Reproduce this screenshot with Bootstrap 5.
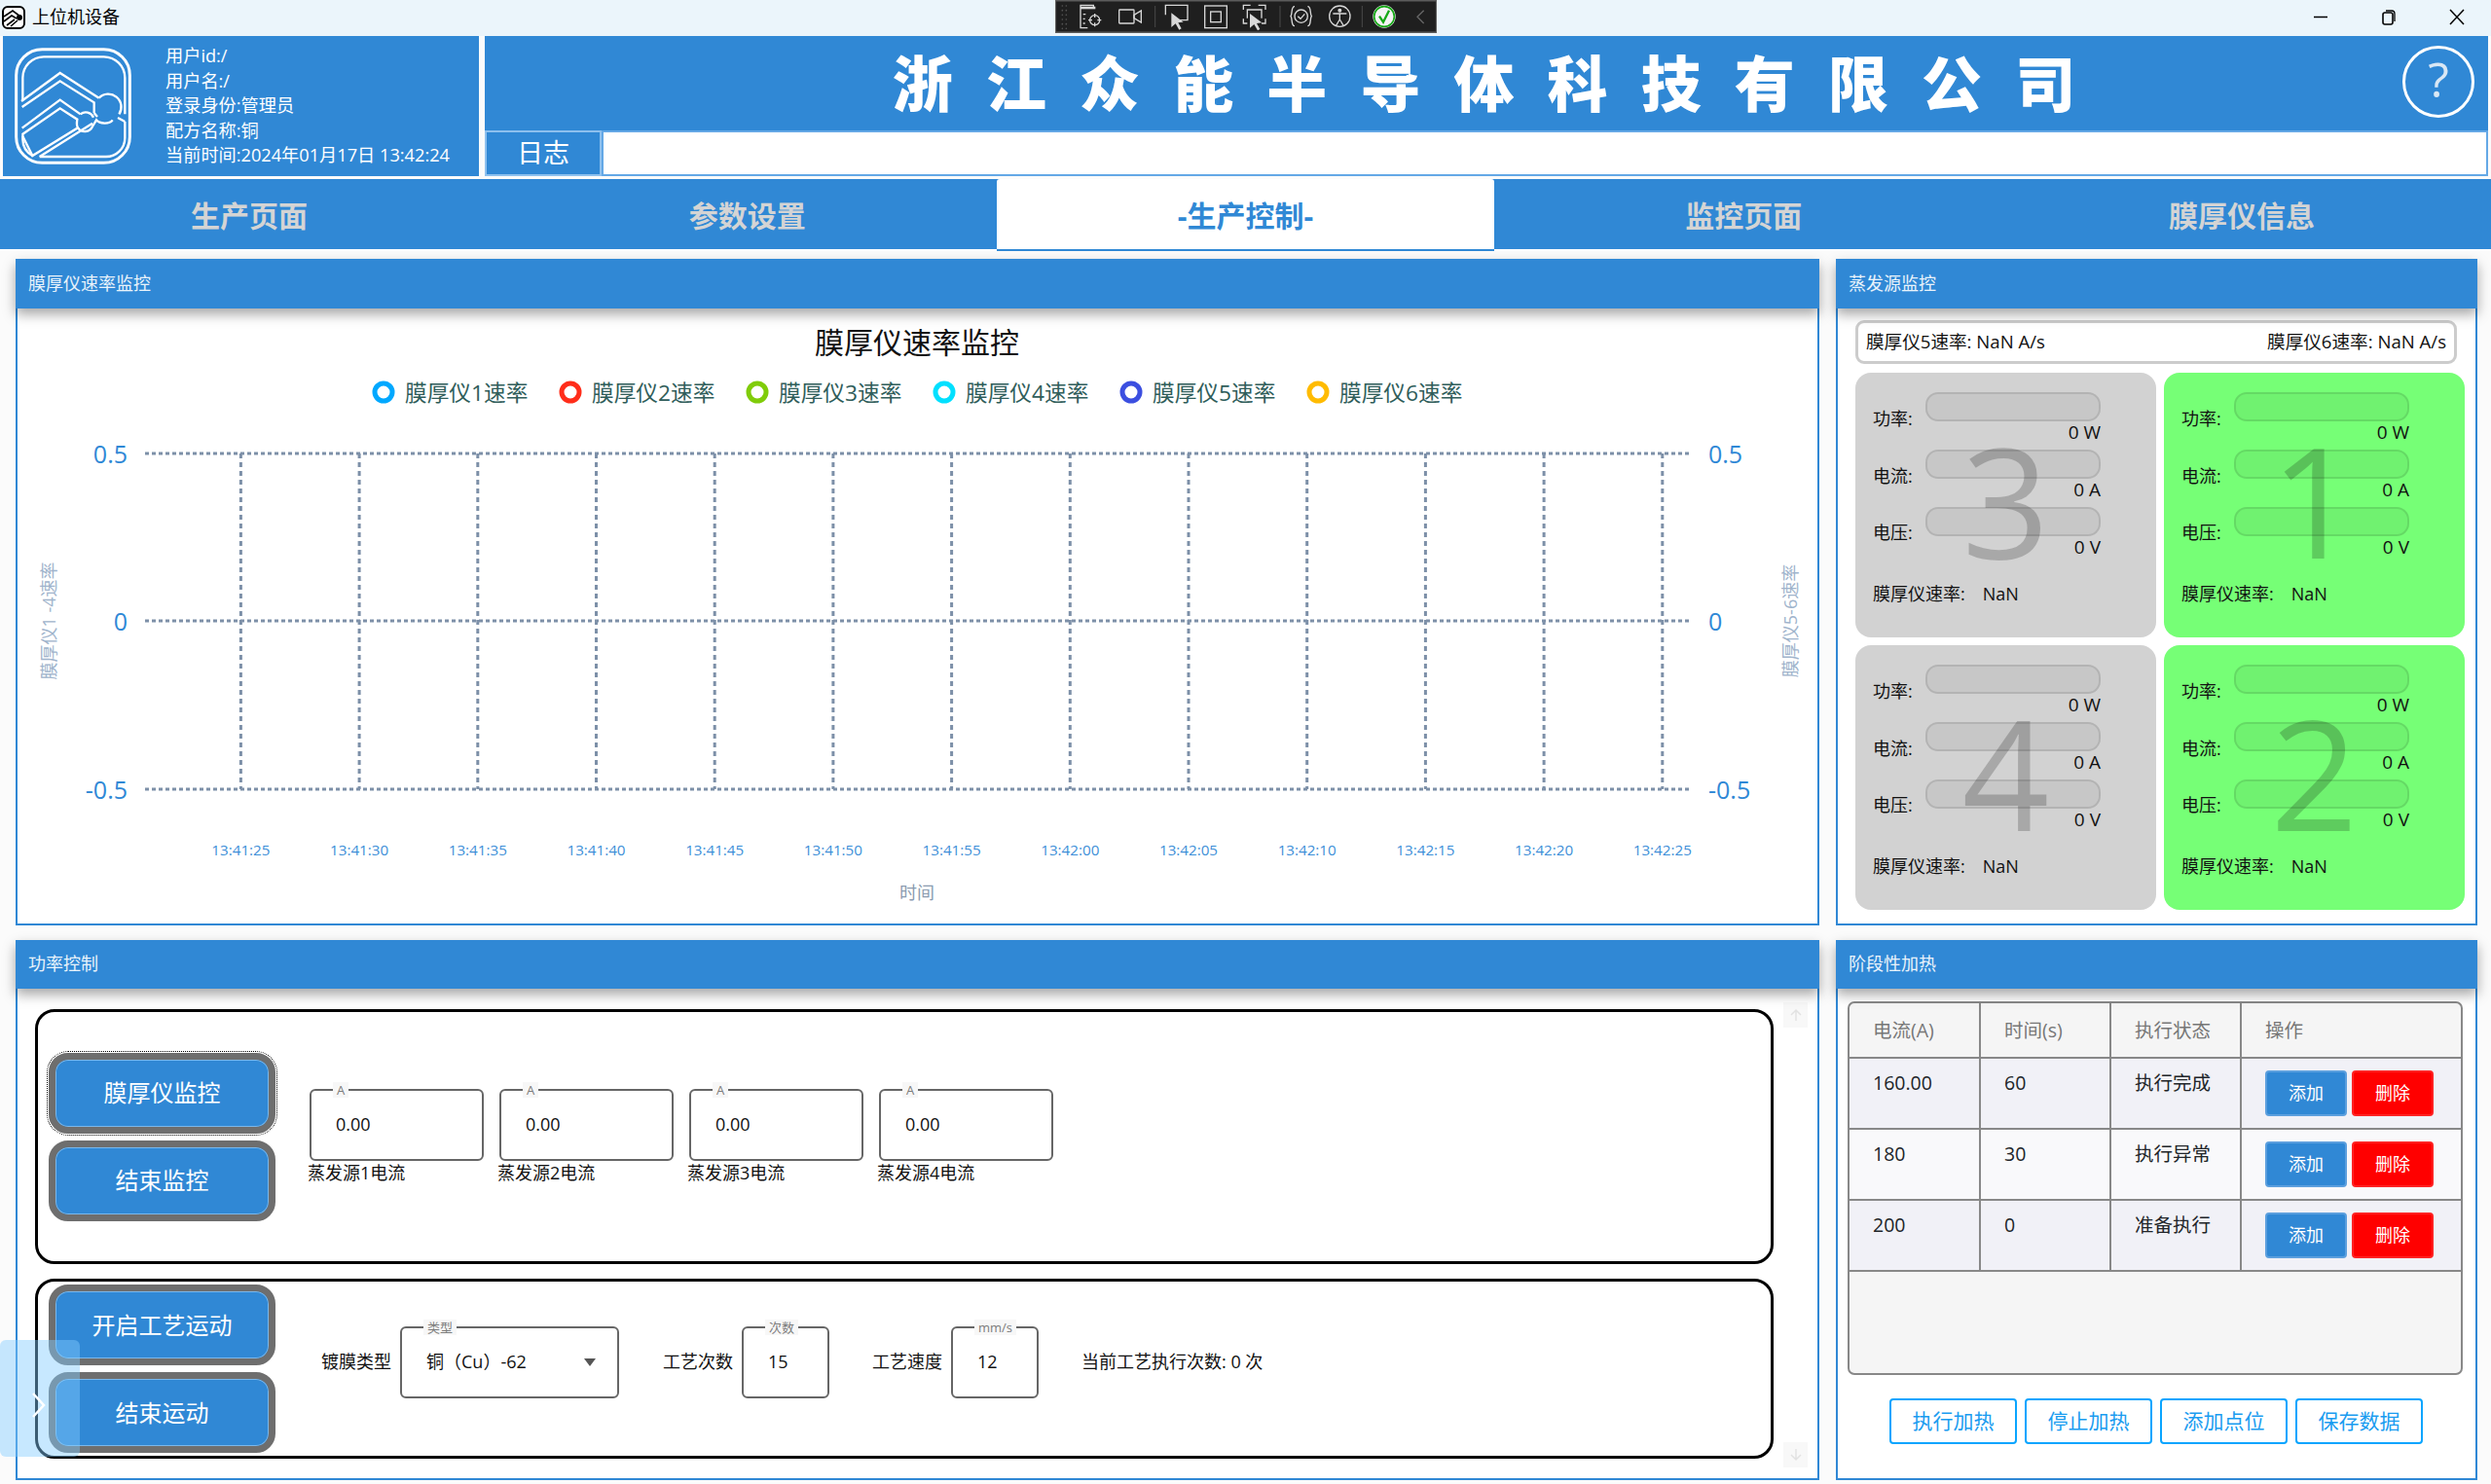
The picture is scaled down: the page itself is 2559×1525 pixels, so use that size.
<!DOCTYPE html>
<html lang="zh-CN">
<head>
<meta charset="utf-8">
<title>上位机设备</title>
<link href="https://cdn.jsdelivr.net/npm/bootstrap@5.3.0/dist/css/bootstrap.min.css" rel="stylesheet">
<style>
:root{--bl:#3088d5;}
html,body{height:100%;}
body{width:2559px;height:1525px;overflow:hidden;background:#fbfbfb;font-family:"Open Sans","Noto Sans CJK SC",sans-serif;font-size:18px;color:#111;position:relative;line-height:1.2;}
.win-bar{height:37px;background:#ebf5fb;padding:0 0 2px 2px;gap:7px;}
.win-name{font-size:18px;color:#000;}
.debug-bar{position:absolute;left:1084px;top:0;width:392px;height:34px;}
.win-btns{margin-left:auto;width:210px;}
.win-btns svg{width:70px;height:34px;}
.top-head{height:144px;padding:0 3px;gap:6px;}
.org-box{width:489px;background:var(--bl);color:#fff;padding-left:12px;gap:35px;}
.org-info{line-height:25.6px;font-size:18.2px;white-space:nowrap;}
.title-box{flex:1;min-width:0;}
.title-band{height:97px;background:var(--bl);position:relative;}
.title-text{font-size:62px;font-weight:900;color:#fff;word-spacing:8px;letter-spacing:5px;margin-top:1px;}
.help-circle{position:absolute;right:14px;top:10px;width:74px;height:74px;border:3px solid #fff;border-radius:50%;color:#d9e7f4;font-size:50px;line-height:62px;text-align:center;}
.log-row{height:47px;}
.log-tag{width:120px;background:var(--bl);border:2px solid #8dc0ee;color:#fff;font-size:27px;}
.log-input{flex:1;background:#fff;border:2px solid #64a8e6;}
.tab-bar{height:74px;background:var(--bl);margin-top:3px;border-bottom:2px solid #fff;}
.tab-item{width:20%;font-size:30px;font-weight:700;color:#d4d4d4;padding-top:4px;}
.tab-on{background:#fff;color:var(--bl);border-radius:3px 3px 0 0;border-bottom:2px solid var(--bl);margin-bottom:-2px;}
.board{padding:8px 14px 0 16px;}
.board-row{gap:17px;margin-bottom:15px;}
.pane{background:#fff;border:2px solid var(--bl);border-radius:0;}
.pane-main{width:1853px;}
.pane-side{width:659px;}
.pane-upper{height:685px;}
.pane-lower{height:555px;}
.pane .card-header{background:var(--bl);color:#e9f3fb;border:0;border-radius:0;font-size:18px;padding:0 13px;display:flex;align-items:center;box-shadow:0 6px 12px rgba(0,0,0,.35);margin:-2px -2px 0;position:relative;z-index:1;}
.pane-upper .card-header{height:51px;}
.pane-lower .card-header{height:50px;}
.chart-svg{display:block;width:1849px;height:632px;}
.chart-svg text{font-family:"Open Sans","Noto Sans CJK SC",sans-serif;}
.rate-box{margin:12px 19px 0 18px;height:45px;border:3px solid #ccc;border-radius:9px;padding:0 8px;font-size:18.6px;white-space:nowrap;}
.gauge-grid{display:grid;grid-template-columns:309px 309px;grid-auto-rows:272px;gap:8px;margin:9px 0 0 18px;}
.gauge-cell{border-radius:16px;padding:20px 0 0 18px;position:relative;overflow:hidden;}
.gauge-off{background:#d2d2d2;}
.gauge-on{background:#76ff76;}
.gauge-num{position:absolute;left:0;right:0;top:33px;text-align:center;font-size:157px;line-height:195px;color:rgba(0,0,0,.2);}
.gauge-line{height:52px;margin-bottom:6.8px;}
.gauge-lab{width:54px;padding-top:3px;}
.gauge-col{width:180px;}
.gauge-track{height:30px;border-radius:13px;background:rgba(0,0,0,.05);border:2px solid rgba(0,0,0,.1);}
.gauge-val{text-align:right;font-size:19px;line-height:22px;}
.gauge-rate{margin-top:27px;gap:18px;}
.frame-box{border:3px solid #000;border-radius:20px;position:relative;}
.frame-one{height:262px;margin:21px 45px 0 18px;padding-left:11px;}
.frame-two{height:185px;margin:15px 45px 0 18px;padding-left:11px;}
.btn-stack{width:233px;gap:7px;}
.big-btn{height:83px;background:var(--bl);color:#fff;border:7px solid #6e6e6e;border-radius:20px;font-size:24px;box-shadow:inset 0 0 0 1px #7ab8ec;padding:0;}
.big-btn:hover{background:var(--bl);color:#fff;border-color:#6e6e6e;}
.big-focus{outline:1px dotted #000;outline-offset:1px;}
.num-group{margin-left:35px;gap:16px;}
.num-field{width:179px;}
.note-box{height:74px;border:2px solid #666;border-radius:6px;position:relative;display:flex;align-items:center;padding-left:25px;color:#111;}
.note-tag{position:absolute;top:-9px;left:22px;background:#f7f7f7;color:#7c7c7c;font-size:13px;line-height:16px;padding:0 4px;white-space:nowrap;}
.num-cap{margin:2px 0 0 -2px;color:#111;}
.proc-row{margin-left:47px;padding-bottom:13px;}
.proc-sel{width:225px;margin:0 45px 0 9px;padding-right:22px;justify-content:space-between;}
.proc-num{width:90px;margin:0 44px 0 9px;}
.tri{width:0;height:0;border-left:6px solid transparent;border-right:6px solid transparent;border-top:8px solid #555;}
.proc-now{white-space:nowrap;}
.side-pull{position:absolute;left:0;top:1377px;width:82px;height:120px;background:rgba(130,205,255,.45);border-radius:6px;}
.side-pull svg{position:absolute;left:32px;top:53px;}
.scroll-arrow{position:absolute;left:1814px;width:25px;height:26px;background:#f8f8f8;}
.scroll-up{top:62px;}
.scroll-down{top:514px;}
.table-box{margin:13px 13px 0 10px;height:384px;background:#f5f5f5;border:2px solid #888;border-radius:7px;overflow:hidden;}
.heat-table{margin:0;width:1028px;table-layout:fixed;--bs-table-bg:transparent;border-collapse:collapse;}
.heat-table th,.heat-table td{border:2px solid #888;border-top:0;padding:13px 0 0 24px;font-weight:400;height:73px;font-size:19.5px;}
.heat-table td:first-child,.heat-table th:first-child{border-left:0;}
.heat-table th{height:56px;color:#777;padding:0 0 0 24px;vertical-align:middle;}
.row-a td{background:#f1f1f7;}
.row-b td{background:#f9f9fb;}
.heat-table td.op-cell{padding:12px 0 0 24px;vertical-align:top;}
.mini-btn{width:84px;height:47px;padding:0;font-size:18px;color:#fff;border-radius:4px;}
.mini-add{background:var(--bl);border:2px solid #5b9fde;}
.mini-del{background:#f00;border:2px solid #f22;margin-left:5px;}
.act-row{margin:24px 0 0 53px;gap:8px;}
.act-btn{width:131px;height:47px;padding:0;border:2px solid #0aa5ff;color:#1a9cf0;background:#fff;border-radius:4px;font-size:21px;}
</style>
</head>
<body>
<div class="win-bar d-flex align-items-center">
  <svg width="24" height="24" viewBox="0 0 24 24"><rect x="1" y="1" width="22" height="22" rx="5" fill="#fff" stroke="#000" stroke-width="2"/><path d="M2 11l9-6 8 6M2 16l8-6 5 3M5 20l8-6M9 21l7-6" fill="none" stroke="#000" stroke-width="1.6"/><circle cx="18" cy="12" r="3" fill="#000"/></svg>
  <span class="win-name">上位机设备</span>
  <div class="win-btns d-flex">
    <svg viewBox="0 0 70 34"><path d="M28 16.500h14" stroke="#000" stroke-width="1.500"/></svg>
    <svg viewBox="0 0 70 34"><rect x="29" y="12" width="10" height="12" rx="2" fill="none" stroke="#000" stroke-width="1.600"/><path d="M32 10h6a3 3 0 0 1 3 3v8" fill="none" stroke="#000" stroke-width="1.300"/></svg>
    <svg viewBox="0 0 70 34"><path d="M28 9l14 15M42 9L28 24" stroke="#000" stroke-width="1.500" fill="none"/></svg>
  </div>
</div>
<svg class="debug-bar" viewBox="12 0 1176 102" aria-hidden="true">
  <rect x="13" y="2" width="1174" height="98" fill="#1f1f1f" stroke="#5c5c5c" stroke-width="5"/>
  <g fill="#555"><circle cx="34" cy="18" r="2.500"/><circle cx="46" cy="18" r="2.500"/><circle cx="34" cy="32" r="2.500"/><circle cx="46" cy="32" r="2.500"/><circle cx="34" cy="46" r="2.500"/><circle cx="46" cy="46" r="2.500"/><circle cx="34" cy="60" r="2.500"/><circle cx="46" cy="60" r="2.500"/><circle cx="34" cy="74" r="2.500"/><circle cx="46" cy="74" r="2.500"/><circle cx="34" cy="88" r="2.500"/><circle cx="46" cy="88" r="2.500"/></g>
  <g fill="none" stroke="#d8d8d8" stroke-width="4">
    <path d="M112 86H90V16h40v10" /><path d="M90 24h46" stroke-width="8"/><path d="M98 44h8M98 58h6M98 72h6"/><circle cx="134" cy="62" r="15"/><path d="M134 42v12M134 70v12M114 62h12M142 62h12"/>
    <rect x="209" y="30" width="46" height="42" rx="2"/><path d="M255 46l22-13v36l-22-13z"/>
    <path d="M352 46V16h68v46h-28"/><path d="M370 40v44l13-11 11 19 7-4-10-18 16-2z" fill="#d8d8d8" stroke="none"/>
    <rect x="473" y="18" width="68" height="68"/><rect x="491" y="36" width="32" height="32"/>
    <path d="M592 30V16h22M638 16h22v14M592 58v14h12M660 58v14h-12"/><path d="M604 56V30h44v26"/><path d="M612 42v44l13-11 11 19 7-4-10-18 16-2z" fill="#d8d8d8" stroke="none"/>
    <path d="M750 20c-12 0-6 20-12 30c6 8 0 30 12 30M790 20c12 0 6 20 12 30c-6 8 0 30-12 30"/><circle cx="770" cy="50" r="20"/><path d="M760 50l8 8 13-15"/>
    <circle cx="889" cy="50" r="32"/><circle cx="889" cy="32" r="4" fill="#d8d8d8"/><path d="M868 42h42M889 42v18M889 60l-12 20M889 60l12 20"/>
    <path d="M1148 32l-20 20 20 20" stroke="#666"/>
  </g>
  <path d="M320 18v66M705 18v66M958 18v66" stroke="#4a4a4a" stroke-width="3"/>
  <circle cx="1026" cy="51" r="35" fill="#f4f4f4"/><circle cx="1026" cy="51" r="31" fill="none" stroke="#16a816" stroke-width="5"/><path d="M1011 50l12 18 18-36" fill="none" stroke="#16a816" stroke-width="7"/>
</svg>

<header class="top-head d-flex">
  <div class="org-box d-flex align-items-center">
    <svg width="120" height="120" viewBox="45 57 360 360" fill="none" stroke="#fff" aria-label="logo">
      <rect x="50" y="62" width="350" height="350" rx="80" stroke-width="9"/>
      <path d="M70 220V150a65 65 0 0 1 65-65h185a65 65 0 0 1 65 65V262M70 325V340a58 58 0 0 0 30 50M385 285V335a58 58 0 0 1-58 58H122" stroke-width="7"/>
      <path d="M66 222L185 135L305 212M68 240L185 160L290 226V258M68 305L185 218L248 262M68 325L185 244L238 278C236 290 236 298 240 304L100 390L70 330" stroke-width="7"/>
      <path d="M305 212a40 40 0 0 1 62 50M290 258l10 12M248 262a26 26 0 0 1 40 10M240 304a26 26 0 0 0 45-4l12-20c10 12 40 14 50 0M385 285l-22-12M285 290L122 393" stroke-width="7"/>
    </svg>
    <div class="org-info">用户id:/<br>用户名:/<br>登录身份:管理员<br>配方名称:铜<br>当前时间:2024年01月17日 13:42:24</div>
  </div>
  <div class="title-box d-flex flex-column">
    <div class="title-band d-flex align-items-center justify-content-center">
      <div class="title-text">浙 江 众 能 半 导 体 科 技 有 限 公 司</div>
      <div class="help-circle">?</div>
    </div>
    <div class="log-row d-flex">
      <div class="log-tag d-flex align-items-center justify-content-center">日志</div>
      <div class="log-input"></div>
    </div>
  </div>
</header>

<nav class="tab-bar d-flex">
  <div class="tab-item d-flex align-items-center justify-content-center">生产页面</div>
  <div class="tab-item d-flex align-items-center justify-content-center">参数设置</div>
  <div class="tab-item tab-on d-flex align-items-center justify-content-center">-生产控制-</div>
  <div class="tab-item d-flex align-items-center justify-content-center">监控页面</div>
  <div class="tab-item d-flex align-items-center justify-content-center">膜厚仪信息</div>
</nav>

<main class="board">
  <div class="board-row d-flex">
    <section class="card pane pane-main pane-upper">
      <div class="card-header">膜厚仪速率监控</div>
      <svg class="chart-svg" viewBox="18 317 1849 632" id="chart"></svg>
    </section>
    <section class="card pane pane-side pane-upper">
      <div class="card-header">蒸发源监控</div>
      <div class="rate-box d-flex align-items-center justify-content-between"><span>膜厚仪5速率: NaN A/s</span><span>膜厚仪6速率: NaN A/s</span></div>
      <div class="gauge-grid" id="gauges"></div>
    </section>
  </div>
  <div class="board-row d-flex">
    <section class="card pane pane-main pane-lower">
      <div class="card-header">功率控制</div>
      <div class="frame-box frame-one d-flex align-items-center">
        <div class="btn-stack d-flex flex-column">
          <button class="btn big-btn big-focus">膜厚仪监控</button>
          <button class="btn big-btn">结束监控</button>
        </div>
        <div class="num-group d-flex">
          <div class="num-field"><div class="note-box"><span class="note-tag">A</span>0.00</div><div class="num-cap">蒸发源1电流</div></div>
          <div class="num-field"><div class="note-box"><span class="note-tag">A</span>0.00</div><div class="num-cap">蒸发源2电流</div></div>
          <div class="num-field"><div class="note-box"><span class="note-tag">A</span>0.00</div><div class="num-cap">蒸发源3电流</div></div>
          <div class="num-field"><div class="note-box"><span class="note-tag">A</span>0.00</div><div class="num-cap">蒸发源4电流</div></div>
        </div>
      </div>
      <div class="frame-box frame-two d-flex align-items-center">
        <div class="btn-stack d-flex flex-column">
          <button class="btn big-btn">开启工艺运动</button>
          <button class="btn big-btn">结束运动</button>
        </div>
        <div class="proc-row d-flex align-items-center">
          <span>镀膜类型</span>
          <div class="note-box proc-sel"><span class="note-tag">类型</span><span>铜（Cu）-62</span><span class="tri"></span></div>
          <span>工艺次数</span>
          <div class="note-box proc-num"><span class="note-tag">次数</span>15</div>
          <span>工艺速度</span>
          <div class="note-box proc-num"><span class="note-tag">mm/s</span>12</div>
          <span class="proc-now">当前工艺执行次数: 0 次</span>
        </div>
      </div>
      <div class="scroll-arrow scroll-up d-flex align-items-center justify-content-center"><svg width="14" height="14" viewBox="0 0 14 14"><path d="M7 13V2M2 7l5-5 5 5" fill="none" stroke="#e2e2e2" stroke-width="1.500"/></svg></div>
      <div class="scroll-arrow scroll-down d-flex align-items-center justify-content-center"><svg width="14" height="14" viewBox="0 0 14 14"><path d="M7 1v11M2 7l5 5 5-5" fill="none" stroke="#e2e2e2" stroke-width="1.500"/></svg></div>
    </section>
    <section class="card pane pane-side pane-lower">
      <div class="card-header">阶段性加热</div>
      <div class="table-box">
        <table class="table heat-table">
          <colgroup><col style="width:134px"><col style="width:134px"><col style="width:134px"><col></colgroup>
          <thead><tr><th>电流(A)</th><th>时间(s)</th><th>执行状态</th><th>操作</th></tr></thead>
          <tbody>
            <tr class="row-a"><td>160.00</td><td>60</td><td>执行完成</td><td class="op-cell"><button class="btn mini-btn mini-add">添加</button><button class="btn mini-btn mini-del">删除</button></td></tr>
            <tr class="row-b"><td>180</td><td>30</td><td>执行异常</td><td class="op-cell"><button class="btn mini-btn mini-add">添加</button><button class="btn mini-btn mini-del">删除</button></td></tr>
            <tr class="row-a"><td>200</td><td>0</td><td>准备执行</td><td class="op-cell"><button class="btn mini-btn mini-add">添加</button><button class="btn mini-btn mini-del">删除</button></td></tr>
          </tbody>
        </table>
      </div>
      <div class="act-row d-flex">
        <button class="btn act-btn">执行加热</button>
        <button class="btn act-btn">停止加热</button>
        <button class="btn act-btn">添加点位</button>
        <button class="btn act-btn">保存数据</button>
      </div>
    </section>
  </div>
</main>
<div class="side-pull"><svg width="16" height="28" viewBox="0 0 16 28"><path d="M2 2l11 12L2 26" fill="none" stroke="#fff" stroke-width="2.500"/></svg></div>

<script>
(function(){
  var g=document.getElementById('gauges');
  [['3','gauge-off'],['1','gauge-on'],['4','gauge-off'],['2','gauge-on']].forEach(function(c){
    var h='<div class="gauge-cell '+c[1]+'"><div class="gauge-num">'+c[0]+'</div>';
    [['功率:','0 W'],['电流:','0 A'],['电压:','0 V']].forEach(function(r){
      h+='<div class="gauge-line d-flex align-items-center"><span class="gauge-lab">'+r[0]+'</span><div class="gauge-col"><div class="gauge-track"></div><div class="gauge-val">'+r[1]+'</div></div></div>';
    });
    h+='<div class="gauge-rate d-flex"><span>膜厚仪速率:</span><span>NaN</span></div></div>';
    g.insertAdjacentHTML('beforeend',h);
  });
  var s='';
  var t=function(x,y,txt,fs,fill,anchor,extra){return '<text x="'+x+'" y="'+y+'" font-size="'+fs+'" fill="'+fill+'" text-anchor="'+(anchor||'middle')+'" dominant-baseline="central" '+(extra||'')+'>'+txt+'</text>';};
  s+=t(942,351,'膜厚仪速率监控',30,'#111');
  var lc=['#00a8ff','#ff2d1a','#80cc0a','#00e0ff','#3c4fe0','#ffbb00'];
  lc.forEach(function(c,i){
    var x=394+i*192;
    s+='<circle cx="'+x+'" cy="403" r="9" fill="#fff" stroke="'+c+'" stroke-width="5"/>';
    s+=t(x+22,403,'膜厚仪'+(i+1)+'速率',22.7,'#2f5d5a','start');
  });
  var grid='#7d90a8';
  [466,638,811].forEach(function(y){
    s+='<path d="M149 '+y+'H1737" stroke="'+grid+'" stroke-width="3" stroke-dasharray="4 3"/>';
  });
  var labels=['13:41:25','13:41:30','13:41:35','13:41:40','13:41:45','13:41:50','13:41:55','13:42:00','13:42:05','13:42:10','13:42:15','13:42:20','13:42:25'];
  labels.forEach(function(l,i){
    var x=(247.4+i*121.7).toFixed(1);
    s+='<path d="M'+x+' 466V811" stroke="'+grid+'" stroke-width="3" stroke-dasharray="5 4"/>';
    s+=t(x,872.5,l,15.2,'#3e8fd8');
  });
  [[466,'0.5'],[638,'0'],[811,'-0.5']].forEach(function(a){
    s+=t(131,a[0],a[1],25,'#2f88d6','end');
    s+=t(1755,a[0],a[1],25,'#2f88d6','start');
  });
  s+=t(50,638,'膜厚仪1 -4速率',18,'#9fb4cc','middle','transform="rotate(-90 50 638)"');
  s+=t(1839,638,'膜厚仪5-6速率',18,'#9fb4cc','middle','transform="rotate(-90 1839 638)"');
  s+=t(942,917,'时间',18,'#8a9bb0');
  document.getElementById('chart').innerHTML=s;
})();
</script>
</body>
</html>
